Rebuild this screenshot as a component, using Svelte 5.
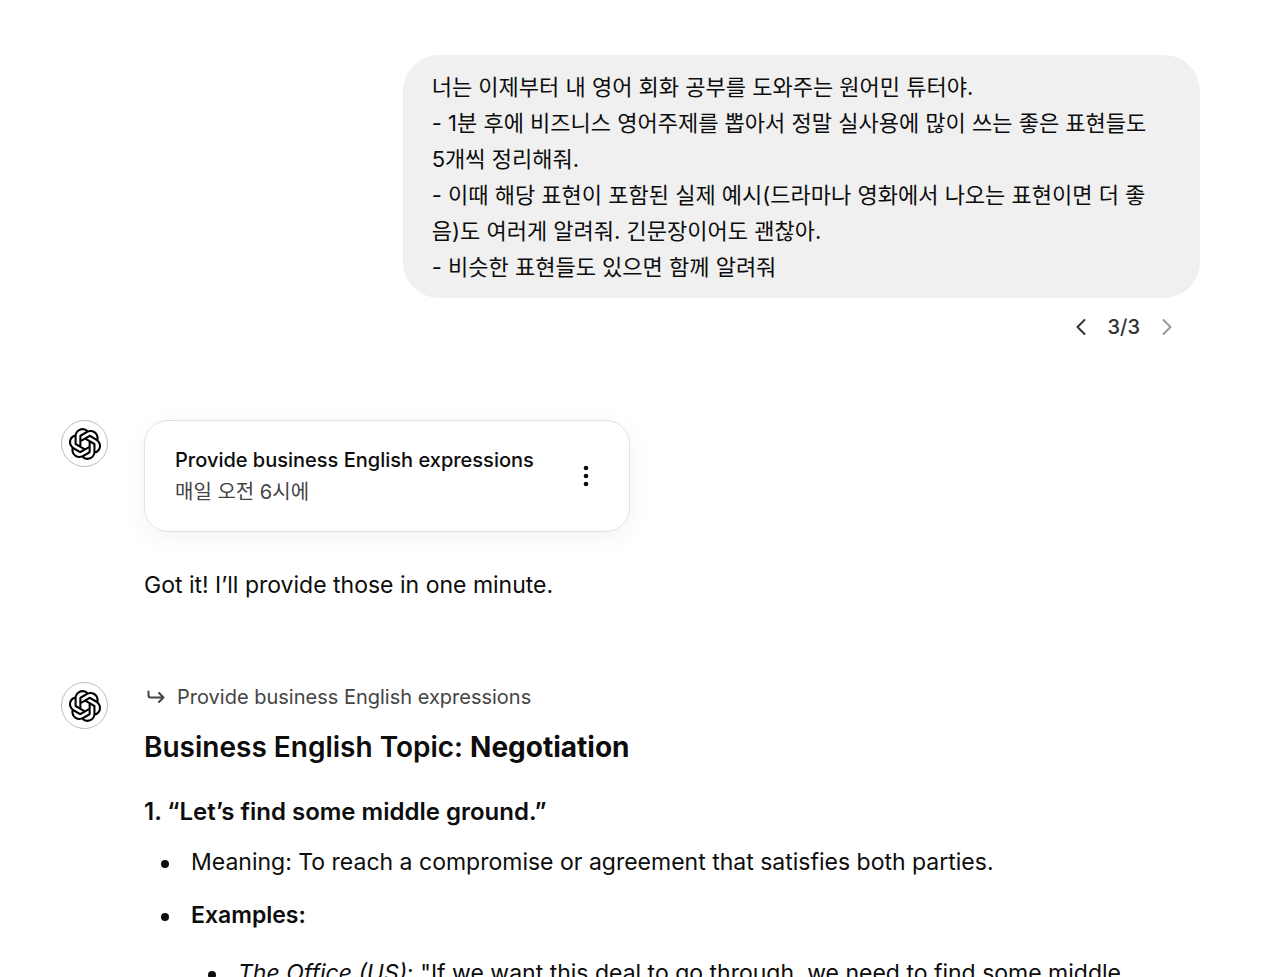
<script>
  const prompt = [
    '너는 이제부터 내 영어 회화 공부를 도와주는 원어민 튜터야.',
    '- 1분 후에 비즈니스 영어주제를 뽑아서 정말 실사용에 많이 쓰는 좋은 표현들도 5개씩 정리해줘.',
    '- 이때 해당 표현이 포함된 실제 예시(드라마나 영화에서 나오는 표현이면 더 좋음)도 여러게 알려줘. 긴문장이어도 괜찮아.',
    '- 비슷한 표현들도 있으면 함께 알려줘'
  ];
  const taskName = 'Provide business English expressions';
</script>

{#snippet avatar()}
  <div class="avatar">
    <svg viewBox="1.7 1.7 16.6 16.6" width="32" height="32" fill="currentColor" aria-hidden="true">
      <path d="M11.2475 18.25C10.6975 18.25 10.175 18.1455 9.68 17.9365C9.185 17.7275 8.745 17.436 8.36 17.062C7.942 17.205 7.5075 17.2765 7.0565 17.2765C6.3195 17.2765 5.6375 17.095 5.0105 16.732C4.3835 16.369 3.8775 15.874 3.4925 15.247C3.1185 14.62 2.9315 13.9215 2.9315 13.1515C2.9315 12.8325 2.9755 12.486 3.0635 12.112C2.6235 11.705 2.2825 11.2375 2.0405 10.7095C1.7985 10.1705 1.6775 9.6095 1.6775 9.0265C1.6775 8.4325 1.804 7.8605 2.057 7.3105C2.31 6.7605 2.662 6.2875 3.113 5.8915C3.575 5.4845 4.1085 5.204 4.7135 5.05C4.8345 4.423 5.0875 3.862 5.4725 3.367C5.8685 2.861 6.3525 2.465 6.9245 2.179C7.4965 1.893 8.107 1.75 8.756 1.75C9.306 1.75 9.8285 1.8545 10.3235 2.0635C10.8185 2.2725 11.2585 2.564 11.6435 2.938C12.0615 2.795 12.496 2.7235 12.947 2.7235C13.684 2.7235 14.366 2.905 14.993 3.268C15.62 3.631 16.1205 4.126 16.4945 4.753C16.8795 5.38 17.072 6.0785 17.072 6.8485C17.072 7.1675 17.028 7.514 16.94 7.888C17.38 8.295 17.721 8.768 17.963 9.307C18.205 9.835 18.326 10.3905 18.326 10.9735C18.326 11.5675 18.1995 12.1395 17.9465 12.6895C17.6935 13.2395 17.336 13.718 16.874 14.125C16.423 14.521 15.895 14.796 15.29 14.95C15.169 15.577 14.9105 16.138 14.5145 16.633C14.1295 17.139 13.651 17.535 13.079 17.821C12.507 18.107 11.8965 18.25 11.2475 18.25ZM7.172 16.1875C7.722 16.1875 8.2005 16.072 8.6075 15.841L11.7095 14.059C11.8195 13.982 11.8745 13.8775 11.8745 13.7455V12.3265L7.8815 14.62C7.6395 14.763 7.3975 14.763 7.1555 14.62L4.037 12.8215C4.037 12.8545 4.0315 12.893 4.0205 12.937V13.135C4.0205 13.696 4.1525 14.213 4.4165 14.686C4.6915 15.148 5.071 15.511 5.555 15.775C6.039 16.05 6.578 16.1875 7.172 16.1875ZM7.337 13.498C7.403 13.531 7.4635 13.5475 7.5185 13.5475C7.5735 13.5475 7.6285 13.531 7.6835 13.498L8.921 12.7885L4.9445 10.4785C4.7025 10.3355 4.5815 10.121 4.5815 9.835V6.2545C4.0315 6.4965 3.5915 6.8705 3.2615 7.3765C2.9315 7.8715 2.7665 8.4215 2.7665 9.0265C2.7665 9.5655 2.904 10.0825 3.179 10.5775C3.454 11.0725 3.8115 11.4465 4.2515 11.6995L7.337 13.498ZM11.2475 17.161C11.8305 17.161 12.3585 17.029 12.8315 16.765C13.3045 16.501 13.6785 16.138 13.9535 15.676C14.2285 15.214 14.366 14.697 14.366 14.125V10.561C14.366 10.429 14.311 10.33 14.201 10.264L12.947 9.538V14.1415C12.947 14.4275 12.826 14.642 12.584 14.785L9.4655 16.5835C10.0045 16.9685 10.5985 17.161 11.2475 17.161ZM11.8745 11.122V8.878L10.01 7.822L8.129 8.878V11.122L10.01 12.178L11.8745 11.122ZM7.0565 5.8585C7.0565 5.5725 7.1775 5.358 7.4195 5.215L10.538 3.4165C9.999 3.0315 9.405 2.839 8.756 2.839C8.173 2.839 7.645 2.971 7.172 3.235C6.699 3.499 6.325 3.862 6.05 4.324C5.786 4.786 5.654 5.303 5.654 5.875V9.4225C5.654 9.5545 5.709 9.659 5.819 9.736L7.0565 10.462V5.8585ZM15.4385 13.7455C15.9885 13.5035 16.423 13.1295 16.742 12.6235C17.072 12.1175 17.237 11.5675 17.237 10.9735C17.237 10.4345 17.0995 9.9175 16.8245 9.4225C16.5495 8.9275 16.192 8.5535 15.752 8.3005L12.6665 6.5185C12.6005 6.4745 12.54 6.458 12.485 6.469C12.43 6.469 12.375 6.4855 12.32 6.5185L11.0825 7.2115L15.0755 9.538C15.1965 9.604 15.2845 9.692 15.3395 9.802C15.4055 9.901 15.4385 10.022 15.4385 10.165V13.7455ZM12.122 5.3635C12.364 5.2095 12.606 5.2095 12.848 5.3635L15.983 7.195V6.898C15.983 6.37 15.851 5.869 15.587 5.3945C15.334 4.9105 14.9655 4.5255 14.4815 4.2395C14.0085 3.9535 13.4585 3.8105 12.8315 3.8105C12.2815 3.8105 11.803 3.926 11.396 4.157L8.294 5.939C8.184 6.016 8.129 6.1205 8.129 6.2525V7.6715L12.122 5.3635Z" />
    </svg>
  </div>
{/snippet}

<main>
  <section class="user">
    <div class="bubble" lang="ko">
      {#each prompt as line}
        <p>{line}</p>
      {/each}
    </div>
    <nav class="pager">
      <button type="button" aria-label="Previous">
        <svg viewBox="0 0 12 18" width="12" height="18"><path d="M9.5 2 2.5 9l7 7" /></svg>
      </button>
      <span>3/3</span>
      <button type="button" aria-label="Next" disabled>
        <svg viewBox="0 0 12 18" width="12" height="18"><path d="m2.5 2 7 7-7 7" /></svg>
      </button>
    </nav>
  </section>

  <article class="reply first">
    {@render avatar()}
    <div class="body">
      <div class="card">
        <div class="info">
          <h2>{taskName}</h2>
          <p lang="ko">매일 오전 6시에</p>
        </div>
        <button type="button" aria-label="Options">
          <svg viewBox="0 0 6 22" width="6" height="22" fill="currentColor">
            <circle cx="3" cy="3" r="2.3" /><circle cx="3" cy="11" r="2.3" /><circle cx="3" cy="19" r="2.3" />
          </svg>
        </button>
      </div>
      <p class="answer">Got it! I’ll provide those in one minute.</p>
    </div>
  </article>

  <article class="reply">
    {@render avatar()}
    <div class="body">
      <div class="source">
        <svg viewBox="0 0 18 14" width="18" height="14"><path d="M1.5 1.5v4a2 2 0 0 0 2 2H16.500M12 3l4.500 4.500L12 12" /></svg>
        <span>{taskName}</span>
      </div>
      <h3>Business English Topic: <strong>Negotiation</strong></h3>
      <h4>1. “Let’s find some middle ground.”</h4>
      <ul>
        <li>Meaning: To reach a compromise or agreement that satisfies both parties.</li>
        <li>
          <strong>Examples:</strong>
          <ul>
            <li><em>The Office (US)</em>: "If we want this deal to go through, we need to find some middle ground."</li>
          </ul>
        </li>
      </ul>
    </div>
  </article>
</main>

<style>
  :global(body) {
    margin: 0;
    background: #fff;
  }

  main {
    box-sizing: border-box;
    height: 100vh;
    overflow: hidden;
    padding: 55px 80px 0 61px;
    color: #0d0d0d;
    font: 23px/36px Inter, 'Noto Sans CJK KR', sans-serif;
  }

  p, h2, h3, h4, ul {
    margin: 0;
  }

  button {
    display: flex;
    padding: 0;
    border: 0;
    background: none;
    color: inherit;
  }

  .user {
    display: flex;
    flex-direction: column;
    align-items: flex-end;
  }

  .bubble {
    box-sizing: border-box;
    width: 70%;
    padding: 14px 38px 13px 29px;
    border-radius: 36px;
    background: #f0f0f0;
    font-size: 22px;
  }

  .pager {
    display: flex;
    align-items: center;
    gap: 21px;
    margin: 12px 27px 0 0;
    color: #333;
    font-size: 20px;
    font-weight: 500;
    line-height: 34px;
  }

  .pager svg, .source svg {
    fill: none;
    stroke: currentColor;
    stroke-width: 2;
    stroke-linecap: round;
    stroke-linejoin: round;
  }

  .pager button:disabled {
    color: #999;
  }

  .reply {
    display: flex;
    gap: 36px;
    margin-top: 79px;
  }

  .first {
    margin-top: 76px;
  }

  .avatar {
    display: flex;
    flex: none;
    align-items: center;
    justify-content: center;
    box-sizing: border-box;
    width: 47px;
    height: 47px;
    border: 1px solid #bbb;
    border-radius: 50%;
    color: #000;
  }

  .body {
    flex: 1;
    min-width: 0;
  }

  .card {
    display: flex;
    align-items: center;
    justify-content: space-between;
    box-sizing: border-box;
    width: fit-content;
    min-width: 486px;
    padding: 23px 40px 23px 30px;
    border: 1px solid #e2e2e2;
    border-radius: 24px;
    box-shadow: 0 6px 24px rgb(0 0 0 / 5%);
    line-height: 32px;
  }

  .card h2 {
    font-size: 20px;
    font-weight: 500;
  }

  .card p {
    color: #444;
    font-size: 20px;
  }

  .answer {
    margin-top: 35px;
  }

  .source {
    display: flex;
    align-items: center;
    gap: 12px;
    padding-left: 3px;
    color: #444;
    font-size: 20px;
    line-height: 30px;
  }

  h3 {
    margin-top: 17px;
    font-size: 28px;
    font-weight: 600;
  }

  h3 strong {
    font-weight: 700;
  }

  h4 {
    margin-top: 29px;
    font-size: 24px;
    font-weight: 600;
  }

  strong {
    font-weight: 600;
  }

  ul {
    padding-left: 47px;
    list-style: none;
  }

  li {
    margin-top: 17px;
  }

  li::before {
    content: '';
    display: inline-block;
    width: 8px;
    height: 8px;
    margin: 0 22px 0 -30px;
    border-radius: 50%;
    background: currentColor;
    vertical-align: middle;
  }

  h4 + ul > li:first-child {
    margin-top: 14px;
  }

  li ul li {
    margin-top: 22px;
  }
</style>
